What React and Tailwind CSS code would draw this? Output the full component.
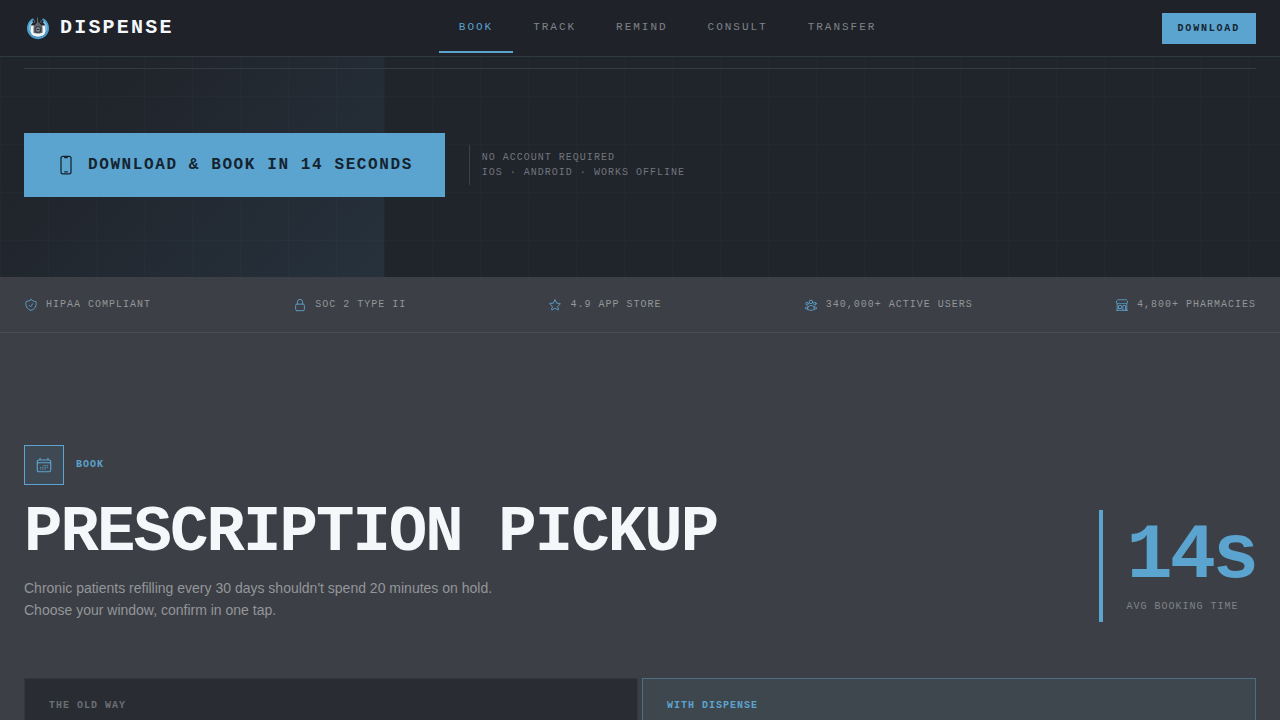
import {
  HiOutlineBuildingStorefront,
  HiOutlineCalendarDays,
  HiOutlineDevicePhoneMobile,
  HiOutlineLockClosed,
  HiOutlineShieldCheck,
  HiOutlineStar,
  HiOutlineUserGroup,
} from 'react-icons/hi2';

const navItems = ['Book', 'Track', 'Remind', 'Consult', 'Transfer'];

const trustItems = [
  { icon: HiOutlineShieldCheck, label: 'HIPAA Compliant' },
  { icon: HiOutlineLockClosed, label: 'SOC 2 Type II' },
  { icon: HiOutlineStar, label: '4.9 App Store' },
  { icon: HiOutlineUserGroup, label: '340,000+ Active Users' },
  { icon: HiOutlineBuildingStorefront, label: '4,800+ Pharmacies' },
];

const Logo = () => (
  <svg viewBox="0 0 28 28" className="size-7" aria-hidden="true">
    {/* open ring */}
    <path d="M9.500 5.200a10 10 0 1 0 9 0" fill="none" stroke="#4a9fd0" strokeWidth="2" />
    <path d="M8.500 7.500a8.300 8.300 0 1 0 11 0" fill="none" stroke="#7cc0e2" strokeWidth="2" />
    {/* mortar */}
    <path d="M6.800 11.500h3.500v7h7.400v-7h3.500v6c0 3-3 5-7.200 5s-7.200-2-7.200-5z" fill="#f1f6fa" />
    {/* pharmacy house and gear */}
    <path d="M13 3.500h1v4l4.500 5v6.200c-1 1-8 1-9 0v-6.200l3.500-4z" fill="#62666c" />
    <path d="M10.500 9v-3M17 9v-3" stroke="#55595f" strokeWidth="1.200" />
    <circle cx="14" cy="15.500" r="2.800" fill="#8b8f94" stroke="#3a3e44" strokeWidth="1.200" />
    <path d="M12.500 15.500h3" stroke="#2b2f35" strokeWidth="1.200" />
  </svg>
);

const Header = () => (
  <header className="flex items-center justify-between border-b border-[#303a42] bg-[#1f2229] px-6 h-[57px]">
    <a href="#top" className="flex items-center gap-2">
      <Logo />
      <span className="text-xl leading-7 font-bold tracking-[0.11em] text-[#f4f8fb] uppercase">Dispense</span>
    </a>
    <nav className="flex">
      {navItems.map((item, i) => (
        <a
          key={item}
          href={`#${item.toLowerCase()}`}
          className={`border-b-2 px-5 py-[18px] text-[11px] leading-3 tracking-[0.18em] uppercase ${
            i === 0 ? 'border-[#5ba4cf] text-[#5ba4cf]' : 'border-transparent text-[#7f8388]'
          }`}
        >
          {item}
        </a>
      ))}
    </nav>
    <button className="bg-[#5ba4cf] px-4 py-2.5 text-[10px] leading-[11px] font-bold tracking-[0.18em] text-[#15232e] uppercase">
      Download
    </button>
  </header>
);

const Hero = () => (
  <section className="relative bg-[#20242b] bg-[linear-gradient(#5ba4cf08_1px,transparent_1px),linear-gradient(90deg,#5ba4cf08_1px,transparent_1px)] bg-[size:48px_48px] bg-[position:0_39px] px-6 pt-[11px]">
    <div className="absolute inset-y-0 left-0 w-[30%] bg-[linear-gradient(135deg,transparent_20%,#5ba4cf1a)]" />
    <div className="relative flex items-center gap-6 border-t border-[#323b42] pt-16 pb-20">
      <button className="flex h-16 items-center gap-3 bg-[#5ba4cf] px-8 text-base font-bold tracking-widest text-[#15232e] uppercase">
        <HiOutlineDevicePhoneMobile className="size-5" />
        Download &amp; Book in 14 Seconds
      </button>
      <p className="border-l border-[#3c4147] py-[5px] pl-3 text-[10px] leading-[15px] tracking-widest text-[#72767b] uppercase">
        No account required
        <br />
        iOS · Android · Works offline
      </p>
    </div>
  </section>
);

const TrustBar = () => (
  <ul className="flex items-center justify-between border-b border-[#484b50] px-6 py-5">
    {trustItems.map(({ icon: Icon, label }) => (
      <li key={label} className="flex items-center gap-2 text-[10px] leading-[15px] tracking-widest text-[#93969a] uppercase">
        <Icon className="size-3.5 text-[#5ba4cf]" />
        {label}
      </li>
    ))}
  </ul>
);

const BookSection = () => (
  <section id="book" className="px-6 pt-28">
    <div className="flex items-end justify-between">
      <div className="pb-px">
        <div className="flex items-center gap-3">
          <div className="flex size-10 items-center justify-center border border-[#5ba4cf] bg-[#3e4953]">
            <HiOutlineCalendarDays className="size-[18px] text-[#5ba4cf]" />
          </div>
          <span className="text-[10px] leading-4 font-bold tracking-widest text-[#5ba4cf] uppercase">Book</span>
        </div>
        <h1 className="mt-4 text-[64px] leading-none font-bold tracking-[-0.03em] text-[#f4f8fb] uppercase">
          Prescription Pickup
        </h1>
        <p className="mt-3 max-w-[480px] font-['Liberation_Sans',sans-serif] text-sm leading-[22px] text-[#93969a]">
          Chronic patients refilling every 30 days shouldn't spend 20 minutes on hold. Choose your window, confirm in one tap.
        </p>
      </div>
      <div className="border-l-4 border-[#5ba4cf] py-2 pl-6">
        <div className="text-[77px] leading-none font-bold tracking-[-0.04em] text-[#5ba4cf]">14s</div>
        <div className="mt-1 text-[10px] leading-[15px] tracking-widest text-[#7f8388] uppercase">Avg booking time</div>
      </div>
    </div>

    <div className="mt-14 grid grid-cols-2 gap-1 text-[10px] leading-[14px] font-bold tracking-widest uppercase">
      <div className="border border-[#34373d] bg-[#2a2c33] px-6 py-5">
        <h2 className="text-[#6b6f75]">The old way</h2>
      </div>
      <div className="border border-[#4c6f86] bg-[#3e474e] px-6 py-5">
        <h2 className="text-[#5ba4cf]">With Dispense</h2>
      </div>
    </div>
  </section>
);

const App = () => (
  <div id="top" className="min-h-screen bg-[#3c3f45] font-['Liberation_Mono',monospace]">
    <Header />
    <main>
      <Hero />
      <TrustBar />
      <BookSection />
    </main>
  </div>
);

export default App;
